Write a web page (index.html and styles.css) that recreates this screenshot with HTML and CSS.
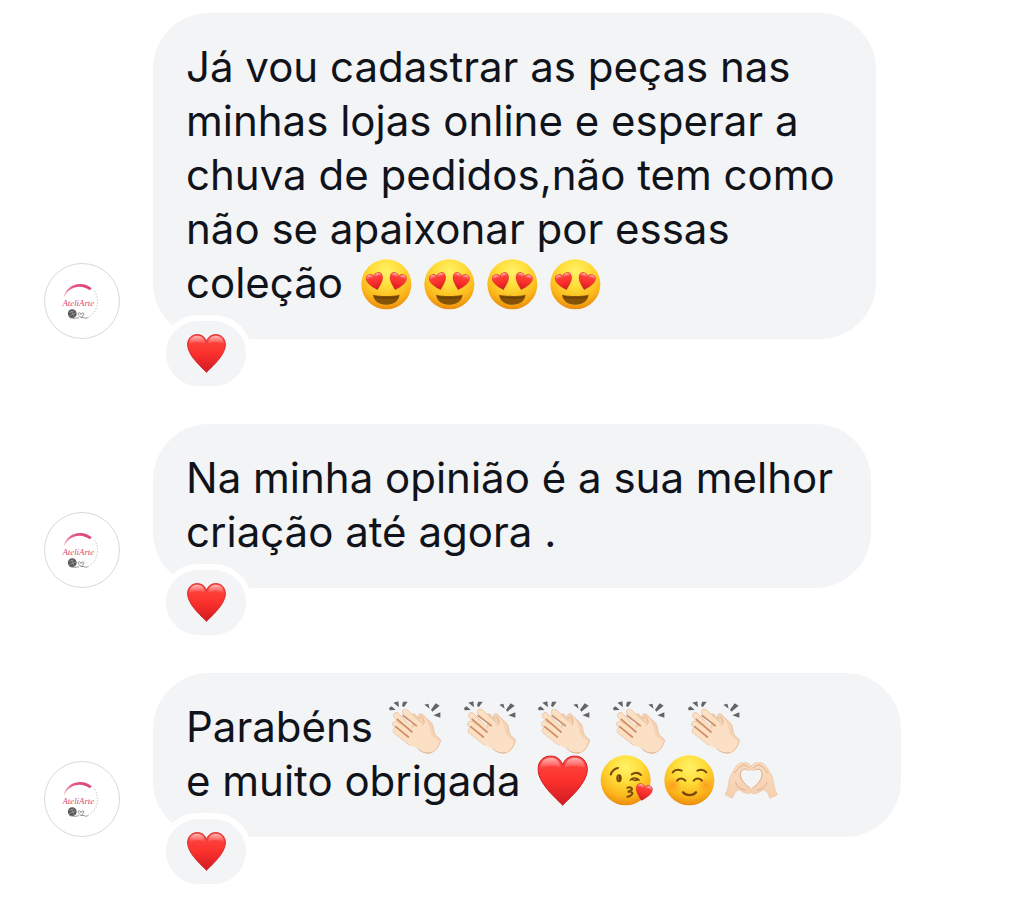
FILE: index.html
```html
<!DOCTYPE html>
<html lang="pt-BR">
<head>
<meta charset="utf-8">
<meta name="viewport" content="width=device-width, initial-scale=1">
<title>Mensagens</title>
<link rel="stylesheet" href="styles.css">
</head>
<body>
<svg class="defs" aria-hidden="true">
  <defs>
    <radialGradient id="face" cx="50%" cy="24%" r="78%">
      <stop offset="0" stop-color="#fff268"/><stop offset=".4" stop-color="#ffdc38"/>
      <stop offset=".75" stop-color="#fbb51a"/><stop offset="1" stop-color="#e8860c"/>
    </radialGradient>
    <linearGradient id="red" x1="0" y1="0" x2="0" y2="1">
      <stop offset="0" stop-color="#ff4a45"/><stop offset=".5" stop-color="#fb312c"/><stop offset="1" stop-color="#d01a22"/>
    </linearGradient>
    <linearGradient id="shine" x1="0" y1="0" x2="0" y2="1">
      <stop offset="0" stop-color="#fff" stop-opacity=".6"/><stop offset="1" stop-color="#fff" stop-opacity="0"/>
    </linearGradient>
    <linearGradient id="skin" x1="0" y1="0" x2="0" y2="1">
      <stop offset="0" stop-color="#fbdcc0"/><stop offset="1" stop-color="#f5cfb0"/>
    </linearGradient>
    <radialGradient id="blush">
      <stop offset="0" stop-color="#ff8a1c" stop-opacity=".7"/><stop offset="1" stop-color="#ff9a1c" stop-opacity="0"/>
    </radialGradient>
    <linearGradient id="arc" x1="0" y1="1" x2="1" y2="0">
      <stop offset="0" stop-color="#f6bccb"/><stop offset=".6" stop-color="#e3577f"/><stop offset="1" stop-color="#d93c6b"/>
    </linearGradient>

    <symbol id="heart" viewBox="0 0 152 152">
      <path d="M76 150C70 140 4 90 2 43C2 18 18 2 40 2C58 2 71 13 76 29C81 13 94 2 112 2C134 2 150 18 150 43C148 90 82 140 76 150Z" fill="url(#red)" stroke="#c91c22" stroke-width="3"/>
      <path d="M9 40C9 18 23 7 40 7C57 7 68 18 70 38C52 30 28 30 9 40ZM143 40C143 18 129 7 112 7C95 7 84 18 82 38C100 30 124 30 143 40Z" fill="url(#shine)"/>
    </symbol>

    <symbol id="heart-eyes" viewBox="0 0 189 162">
      <g transform="translate(0 8)">
        <circle cx="94" cy="77" r="75" fill="url(#face)"/>
        <use href="#heart" x="-26" y="-26" width="52" height="52" transform="translate(61 69) rotate(-14)"/>
        <use href="#heart" x="-26" y="-26" width="52" height="52" transform="translate(127 69) rotate(14)"/>
        <path d="M54 108C67 113 121 113 134 108C132 127 115 138 94 138C73 138 56 127 54 108Z" fill="#855307"/>
        <path d="M58 111C72 117 116 117 130 111L128 117C112 121 76 121 60 117Z" fill="#6b4003"/>
      </g>
    </symbol>

    <symbol id="clap" viewBox="0 0 189 162">
      <g transform="translate(-36 -29)">
        <path d="M48 53L56 48L68 59L50 60ZM61 37L76 33L78 51ZM90 34L104 34L93 50L87 47ZM154 43L166 40L170 55ZM188 39L200 46L178 64L174 58ZM202 66L202 82L181 75Z" fill="#626467"/>
        <path d="M116 88C113 72 123 65 130 76L140 86L137 79C136 68 147 67 153 77L176 99C183 106 181 123 187 134L203 149C198 172 184 190 163 188L128 160Z" fill="#f5d2b2" stroke="#e3b793" stroke-width="2"/>
        <g stroke-linecap="round" fill="none">
          <path d="M69 121L112 155M68 101L120 143M70 76L125 130M97 65L143 108" stroke="#deac85" stroke-width="19"/>
          <path d="M69 121L112 155M68 101L120 143M70 76L125 130M97 65L143 108" stroke="#fbe0c4" stroke-width="17"/>
        </g>
        <path d="M102 121L143 98C151 103 155 94 149 79C164 88 170 109 174 132C180 142 193 147 199 153C192 174 181 187 165 188C151 188 145 178 133 174C119 171 105 158 98 150Z" fill="#fbe0c6"/>
        <path d="M90 76L130 106M73 87L117 125M68 109L106 140" stroke="#cf8f66" stroke-width="5" stroke-linecap="round"/>
        <path d="M145 79C158 91 153 103 148 104M134 174C145 187 162 190 173 187" stroke="#dfae87" stroke-width="3" fill="none"/>
      </g>
    </symbol>

    <symbol id="kiss" viewBox="0 0 189 162">
      <circle cx="92" cy="79" r="75" fill="url(#face)"/>
      <g fill="none" stroke="#78490b" stroke-linecap="round">
        <path d="M47 62C51 50 58 44 69 42M110 61C120 55 130 55 138 63" stroke-width="6"/>
        <path d="M106 78C113 70 125 70 132 78M112 76C118 80 125 79 129 76" stroke-width="5"/>
        <path d="M97 101C108 98 116 104 107 110C104 112 100 113 98 113C111 111 116 117 109 123C105 127 101 128 97 128" stroke-width="6"/>
      </g>
      <ellipse cx="72" cy="73" rx="8" ry="12" fill="#714307"/>
      <path d="M70 66V79" stroke="#a57420" stroke-width="3" stroke-linecap="round"/>
      <use href="#heart" x="-25" y="-25" width="51" height="51" transform="translate(145 115) rotate(14)"/>
    </symbol>

    <symbol id="smile" viewBox="0 0 189 162">
      <circle cx="94" cy="79" r="75" fill="url(#face)"/>
      <circle cx="46" cy="94" r="25" fill="url(#blush)"/><circle cx="142" cy="94" r="25" fill="url(#blush)"/>
      <g fill="none" stroke="#78490b" stroke-linecap="round">
        <path d="M44 55C50 47 61 46 71 50M118 50C128 46 138 47 145 55" stroke-width="6"/>
        <path d="M57 80C62 71 76 71 82 80M107 80C112 71 126 71 132 80" stroke-width="6"/>
        <path d="M75 115C84 126 105 126 114 115" stroke-width="7"/>
      </g>
    </symbol>

    <symbol id="big-heart" viewBox="0 0 189 162">
      <use href="#heart" x="16" y="4" width="152" height="152"/>
    </symbol>

    <symbol id="half-hand" viewBox="0 0 189 162">
      <path d="M12 121C20 110 21 98 23 86C25 68 34 54 44 40C49 30 59 24 68 27C78 24 88 29 91 40C92 49 86 52 79 47C66 40 57 49 58 64C60 80 74 93 87 102C94 107 93 116 85 119C77 120 67 116 58 109C47 105 39 117 35 132C26 130 19 127 12 121Z" fill="url(#skin)" stroke="#e9c1a2" stroke-width="2"/>
      <path d="M64 33C72 32 80 36 85 43M41 58C47 47 55 38 64 34M44 84C46 100 60 104 74 110" fill="none" stroke="#e2ab88" stroke-width="3"/>
      <path d="M79 48C66 41 57 50 58 65C60 80 74 93 86 102" fill="none" stroke="#d99b76" stroke-width="2"/>
    </symbol>
    <symbol id="heart-hands" viewBox="0 0 189 162">
      <use href="#half-hand" width="189" height="162"/>
      <use href="#half-hand" width="189" height="162" transform="translate(181 0) scale(-1 1)"/>
    </symbol>

    <symbol id="logo" viewBox="0 0 76 76">
      <path d="M19 35C21 21 38 16 48 25L46 27C37 20 24 23 19 35Z" fill="url(#arc)"/>
      <path d="M51 28C56 36 55 49 44 55" fill="none" stroke="#aaa" stroke-width="1" stroke-dasharray="1 2"/>
      <text x="18" y="43" class="logo-text">AteliArte</text>
      <circle cx="28" cy="51" r="4.5" fill="#555"/>
      <path d="M25 50L30 48M25 53L32 50M27 48L30 54" stroke="#aaa" stroke-width=".7"/>
      <path d="M25 55C29 56 32 56 35 55M37 55C33 52 34 50 35 50C36 50 37 51 37 52C37 50 40 50 40 51C40 53 38 54 37 55C40 54 42 57 44 55" fill="none" stroke="#777" stroke-width=".8"/>
    </symbol>
  </defs>
</svg>

<main class="chat">
  <article class="message">
    <svg class="avatar" role="img" aria-label="AteliArte"><use href="#logo"/></svg>
    <div class="bubble bubble--first">
      <p class="text">Já vou cadastrar as peças nas<br>minhas lojas online e esperar a<br>chuva de pedidos,não tem como<br>não se apaixonar por essas<br>coleção <svg class="emoji" role="img" aria-label="😍"><use href="#heart-eyes"/></svg><svg class="emoji" role="img" aria-label="😍"><use href="#heart-eyes"/></svg><svg class="emoji" role="img" aria-label="😍"><use href="#heart-eyes"/></svg><svg class="emoji" role="img" aria-label="😍"><use href="#heart-eyes"/></svg></p>
      <span class="reaction"><svg class="reaction-heart" role="img" aria-label="❤️"><use href="#heart"/></svg></span>
    </div>
  </article>

  <article class="message">
    <svg class="avatar" role="img" aria-label="AteliArte"><use href="#logo"/></svg>
    <div class="bubble bubble--second">
      <p class="text">Na minha opinião é a sua melhor<br>criação até agora .</p>
      <span class="reaction"><svg class="reaction-heart" role="img" aria-label="❤️"><use href="#heart"/></svg></span>
    </div>
  </article>

  <article class="message">
    <svg class="avatar" role="img" aria-label="AteliArte"><use href="#logo"/></svg>
    <div class="bubble bubble--third">
      <p class="text">Parabéns <svg class="emoji" role="img" aria-label="👏🏻"><use href="#clap"/></svg> <svg class="emoji" role="img" aria-label="👏🏻"><use href="#clap"/></svg> <svg class="emoji" role="img" aria-label="👏🏻"><use href="#clap"/></svg> <svg class="emoji" role="img" aria-label="👏🏻"><use href="#clap"/></svg> <svg class="emoji" role="img" aria-label="👏🏻"><use href="#clap"/></svg><br>e muito obrigada <svg class="emoji" role="img" aria-label="❤️"><use href="#big-heart"/></svg><svg class="emoji" role="img" aria-label="😘"><use href="#kiss"/></svg><svg class="emoji" role="img" aria-label="☺️"><use href="#smile"/></svg><svg class="emoji" role="img" aria-label="🫶🏻"><use href="#heart-hands"/></svg></p>
      <span class="reaction"><svg class="reaction-heart" role="img" aria-label="❤️"><use href="#heart"/></svg></span>
    </div>
  </article>
</main>
</body>
</html>
```
FILE: styles.css
```css
* {
  box-sizing: border-box;
}

body {
  margin: 0;
  background: #fff;
  color: #10131a;
  font-family: Inter, "Liberation Sans", sans-serif;
}

.defs {
  position: absolute;
  width: 0;
  height: 0;
}

.chat {
  display: flex;
  flex-direction: column;
  gap: 85px;
  padding: 13px 44px 68px;
}

.message {
  display: flex;
  align-items: flex-end;
  gap: 33px;
}

.avatar {
  flex: none;
  width: 76px;
  height: 76px;
  border: 1px solid #d8d8da;
  border-radius: 50%;
}

.logo-text {
  fill: #dc4772;
  font: italic 9px "Liberation Serif", serif;
}

.bubble {
  position: relative;
  padding: 27px 33px 29px;
  border-radius: 56px;
  background: #f3f4f6;
}

.bubble--first {
  flex: 0 1 723px;
}

.bubble--second {
  flex: 0 1 718px;
}

.bubble--third {
  flex: 0 1 748px;
}

.text {
  margin: 0;
  font-size: 42px;
  line-height: 54px;
}

.emoji {
  display: inline-block;
  width: 63px;
  height: 54px;
  vertical-align: top;
}

.reaction {
  position: absolute;
  left: 7px;
  top: calc(100% - 24px);
  display: flex;
  align-items: center;
  justify-content: center;
  width: 92px;
  height: 77px;
  border: 6px solid #fff;
  border-radius: 39px;
  background: #f3f4f6;
}

.reaction-heart {
  width: 39px;
  height: 39px;
}
```
